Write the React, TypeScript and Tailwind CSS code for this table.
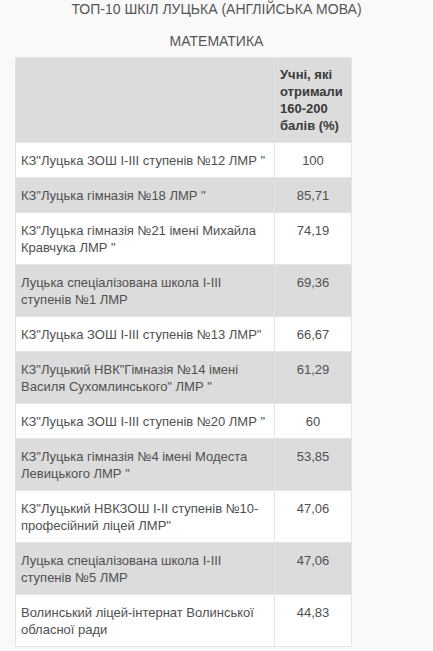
import React from "react";

const rows: [string, string][] = [
  ['КЗ"Луцька ЗОШ I-III ступенів №12 ЛМР "', "100"],
  ['КЗ"Луцька гімназія №18 ЛМР "', "85,71"],
  ['КЗ"Луцька гімназія №21 імені Михайла Кравчука ЛМР "', "74,19"],
  ["Луцька спеціалізована школа I-III ступенів №1 ЛМР", "69,36"],
  ['КЗ"Луцька ЗОШ I-III ступенів №13 ЛМР"', "66,67"],
  ['КЗ"Луцький НВК"Гімназія №14 імені Василя Сухомлинського" ЛМР "', "61,29"],
  ['КЗ"Луцька ЗОШ I-III ступенів №20 ЛМР "', "60"],
  ['КЗ"Луцька гімназія №4 імені Модеста Левицького ЛМР "', "53,85"],
  ['КЗ"Луцький НВКЗОШ I-II ступенів №10-професійний ліцей ЛМР"', "47,06"],
  ["Луцька спеціалізована школа I-III ступенів №5 ЛМР", "47,06"],
  ["Волинський ліцей-інтернат Волинської обласної ради", "44,83"],
];

export default function App() {
  return (
    <div
      className="min-h-[651px] bg-[#f9f9f9] text-[#505050]"
      style={{ fontFamily: '"Liberation Sans", Arial, sans-serif' }}
    >
      <p className="pt-[1px] text-center text-[14px] leading-[16px] text-[#555]">
        ТОП-10 ШКІЛ ЛУЦЬКА (АНГЛІЙСЬКА МОВА)
      </p>
      <p className="mt-[16px] text-center text-[14px] leading-[16px] text-[#555]">
        МАТЕМАТИКА
      </p>
      <table className="ml-[15px] mt-[8px] w-[337px] border-collapse text-[13px] leading-[17px]">
        <tbody>
          <tr className="bg-[#dcdcdc]">
            <td className="w-[259px] border border-[#e4e4e4] px-[5px] pt-[8px] pb-[8px]"></td>
            <td className="border border-[#e4e4e4] px-[5px] pt-[8px] pb-[8px] align-top font-bold text-[#3a3a3a]">
              Учні, які отримали 160-200 балів (%)
            </td>
          </tr>
          {rows.map(([name, val], i) => (
            <tr key={i} className={i % 2 === 0 ? "bg-white" : "bg-[#dcdcdc]"}>
              <td className="border border-[#e4e4e4] px-[5px] pt-[9px] pb-[8px] align-top">
                {name}
              </td>
              <td className="border border-[#e4e4e4] px-[5px] pt-[9px] pb-[8px] text-center align-top">
                {val}
              </td>
            </tr>
          ))}
        </tbody>
      </table>
    </div>
  );
}
